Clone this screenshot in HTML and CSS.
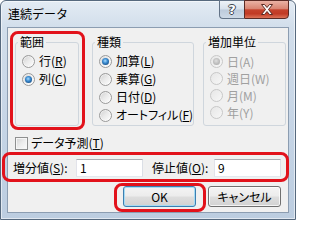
FILE: index.html
```html
<!DOCTYPE html>
<html lang="ja">
<head>
<meta charset="utf-8">
<title>連続データ</title>
<link rel="stylesheet" href="styles.css">
</head>
<body>
<div class="window">
  <div class="titlebar">
    <span class="title">連続データ</span>
    <div class="caption-btns">
      <span class="cbtn help">?</span>
      <span class="cbtn close">
        <svg width="14" height="11" viewBox="0 0 14 11"><path d="M1.5 0.5h3l2.5 3 2.5-3h3l-4 5 4 5h-3l-2.5-3-2.5 3h-3l4-5z" fill="#fff" stroke="#5a2a22" stroke-width="1" stroke-linejoin="round"/></svg>
      </span>
    </div>
  </div>
  <div class="client">
    <div class="groups">
      <div class="hl hl-range">
        <fieldset class="group g-range">
          <legend>範囲</legend>
          <label class="opt"><span class="radio"></span><span class="txt">行(<u>R</u>)</span></label>
          <label class="opt"><span class="radio on"></span><span class="txt">列(<u>C</u>)</span></label>
        </fieldset>
      </div>
      <fieldset class="group g-type">
        <legend>種類</legend>
        <label class="opt"><span class="radio on"></span><span class="txt">加算(<u>L</u>)</span></label>
        <label class="opt"><span class="radio"></span><span class="txt">乗算(<u>G</u>)</span></label>
        <label class="opt"><span class="radio"></span><span class="txt">日付(<u>D</u>)</span></label>
        <label class="opt"><span class="radio"></span><span class="txt">オートフィル(<u>F</u>)</span></label>
      </fieldset>
      <fieldset class="group g-unit">
        <legend>増加単位</legend>
        <label class="opt dis"><span class="radio on"></span><span class="txt">日(A)</span></label>
        <label class="opt dis"><span class="radio"></span><span class="txt">週日(W)</span></label>
        <label class="opt dis"><span class="radio"></span><span class="txt">月(M)</span></label>
        <label class="opt dis"><span class="radio"></span><span class="txt">年(Y)</span></label>
      </fieldset>
    </div>
    <label class="check-row"><span class="check"></span><span class="txt">データ予測(<u>T</u>)</span></label>
    <div class="input-row hl hl-inputs">
      <span class="lbl">増分値(<u>S</u>):</span><span class="field">1</span>
      <span class="lbl lbl2">停止値(<u>O</u>):</span><span class="field">9</span>
    </div>
    <div class="btn-row">
      <span class="btn default hl hl-ok">OK</span>
      <span class="btn">キャンセル</span>
    </div>
  </div>
</div>
</body>
</html>
```

FILE: styles.css
```css
html, body {
  margin: 0;
  padding: 0;
}
body {
  width: 296px;
  height: 220px;
  overflow: hidden;
  font-family: "Noto Sans CJK JP", "Noto Sans", sans-serif;
  font-size: 12px;
  line-height: 14px;
  color: #000;
}
.window {
  width: 296px;
  height: 220px;
  box-sizing: border-box;
  border: 1px solid #56697e;
  border-radius: 6px 6px 0 0;
  background: linear-gradient(180deg, #e3ebf4 0px, #d2deeb 26px, #c6d5e6 120px, #bccde0 100%);
  box-shadow: inset 0 0 0 1px rgba(255, 255, 255, 0.55);
  display: flex;
  flex-direction: column;
}
.titlebar {
  height: 26px;
  flex: none;
  display: flex;
  align-items: flex-start;
  padding: 0 6px 0 7px;
}
.title {
  margin-top: 6px;
}
.caption-btns {
  margin-left: auto;
  display: flex;
  margin-top: -1px;
}
.cbtn {
  height: 19px;
  box-sizing: border-box;
  display: flex;
  align-items: center;
  justify-content: center;
}
.help {
  width: 25px;
  border: 1px solid #637387;
  border-right: none;
  border-radius: 0 0 0 4px;
  background: linear-gradient(180deg, #eef3f8 0%, #d7e1ec 48%, #bccadb 52%, #cdd9e6 100%);
  color: #fff;
  font-family: "DejaVu Sans", sans-serif;
  font-weight: bold;
  font-size: 13px;
  text-shadow: 1px 0 0 #3d4650, -1px 0 0 #3d4650, 0 1px 0 #3d4650, 0 -1px 0 #3d4650;
}
.close {
  width: 45px;
  border: 1px solid #5a2a24;
  border-radius: 0 0 4px 0;
  background: linear-gradient(180deg, #eab2a4 0%, #d98573 45%, #c5432d 52%, #c13a24 75%, #dc7358 100%);
}
.client {
  flex: 1;
  margin: 0 6px 6px 6px;
  border: 1px solid #8c9db1;
  background: #f0f0f0;
  display: flex;
  flex-direction: column;
  padding-top: 7px;
  font-feature-settings: "palt";
}
.groups {
  display: flex;
  align-items: flex-start;
  padding-left: 7px;
}
.group {
  margin: 0;
  padding: 3px 0 0 0;
  border: 1px solid #cfd6dd;
  border-radius: 3px;
  box-sizing: border-box;
  height: 91px;
  min-width: 0;
}
.group legend {
  padding: 0 2px;
  margin-left: 2px;
  line-height: 14px;
}
.g-range { width: 64px; }
.g-type { width: 102px; margin-left: 13px; }
.g-unit { width: 83px; margin-left: 9px; }
.opt {
  display: flex;
  align-items: center;
  height: 18px;
  padding-left: 6px;
  gap: 4px;
  white-space: nowrap;
}
.g-unit { padding-top: 4px; }
.g-unit .opt { height: 17px; }
.txt {
  white-space: nowrap;
}
.radio {
  position: relative;
  width: 13px;
  height: 13px;
  flex: none;
  box-sizing: border-box;
  border-radius: 50%;
  border: 1px solid #9a9a9a;
  background: linear-gradient(135deg, #cfcfcf 0%, #e9e9e9 45%, #ffffff 100%);
  box-shadow: inset 0 0 0 1px rgba(255, 255, 255, 0.5);
}
.radio.on::after {
  content: "";
  position: absolute;
  left: 2px;
  top: 2px;
  width: 7px;
  height: 7px;
  border-radius: 50%;
  background: radial-gradient(circle at 45% 40%, #a8dcff 0%, #3b8bd0 40%, #164e86 80%, #0d3562 100%);
}
.dis { color: #a0a0a0; }
.dis .radio {
  border-color: #c8c8c8;
  background: linear-gradient(135deg, #e6e6e6, #f7f7f7);
  box-shadow: none;
}
.dis .radio.on::after {
  background: radial-gradient(circle at 45% 40%, #dedede 0%, #bcbcbc 55%, #a8a8a8 100%);
}
.check-row {
  display: flex;
  align-items: center;
  gap: 3px;
  margin-top: 10px;
  padding-left: 7px;
  height: 14px;
}
.check {
  width: 13px;
  height: 13px;
  flex: none;
  box-sizing: border-box;
  border: 1px solid #8e8f8f;
  background: linear-gradient(135deg, #d3d3d3 0%, #ececec 50%, #fbfbfb 100%);
  box-shadow: inset 0 0 0 1px #f6f6f6;
}
.input-row {
  display: flex;
  align-items: center;
  margin-top: 9px;
  padding-left: 5px;
  height: 18px;
}
.lbl {
  width: 63px;
  flex: none;
  white-space: nowrap;
}
.lbl2 {
  width: 62px;
  margin-left: 9px;
}
.field {
  width: 67px;
  height: 18px;
  box-sizing: border-box;
  border: 1px solid;
  border-color: #abadb3 #dbdfe6 #e3e9ef #e2e3ea;
  background: #fff;
  padding-left: 3px;
  line-height: 16px;
}
.btn-row {
  display: flex;
  justify-content: flex-end;
  gap: 12px;
  margin-top: 9px;
  padding-right: 7px;
}
.btn {
  width: 73px;
  height: 21px;
  box-sizing: border-box;
  border: 1px solid #707070;
  border-radius: 3px;
  background: linear-gradient(180deg, #f4f4f4 0%, #ececec 48%, #dedede 52%, #d2d2d2 100%);
  box-shadow: inset 0 0 0 1px rgba(255, 255, 255, 0.75);
  display: flex;
  align-items: center;
  justify-content: center;
}
.btn.default {
  border-color: #3c7fb1;
  box-shadow: inset 0 0 0 1px #a6dbf4;
}
.hl {
  position: relative;
}
.hl::after {
  content: "";
  position: absolute;
  border: 3px solid #e2121b;
  border-radius: 8px;
  pointer-events: none;
}
.hl-range::after {
  top: -4px;
  right: -6px;
  bottom: -4px;
  left: -5px;
}
.hl-inputs::after {
  top: -7px;
  right: -1px;
  bottom: -5px;
  left: -6px;
}
.hl-ok::after {
  top: -4px;
  right: -11px;
  bottom: -6px;
  left: -10px;
}
```
